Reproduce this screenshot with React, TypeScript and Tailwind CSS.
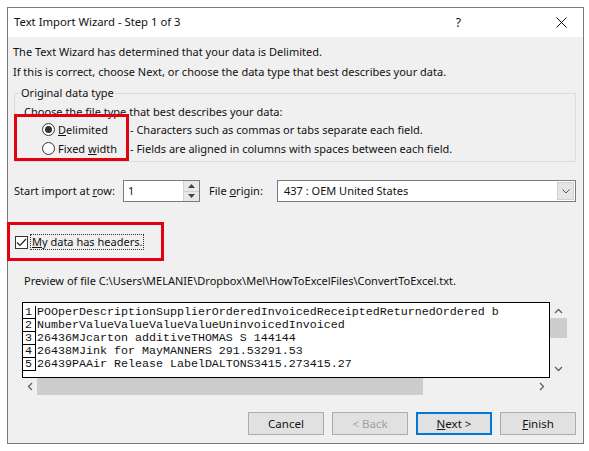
import React from "react";

const ui = { fontFamily: '"Noto Sans", "Open Sans", sans-serif' };
const mono = { fontFamily: '"Liberation Mono", "Courier New", monospace' };

const previewLines = [
  "POOperDescriptionSupplierOrderedInvoicedReceiptedReturnedOrdered b",
  "NumberValueValueValueValueUninvoicedInvoiced",
  "26436MJcarton additiveTHOMAS S 144144",
  "26438MJink for MayMANNERS 291.53291.53",
  "26439PAAir Release LabelDALTONS3415.273415.27",
  "",
];

function Radio({ checked }: { checked: boolean }) {
  return (
    <span className="flex h-[13px] w-[13px] items-center justify-center rounded-full border border-[#333] bg-white">
      {checked && <span className="h-[7px] w-[7px] rounded-full bg-[#333]" />}
    </span>
  );
}

function Button({
  children,
  primary,
  disabled,
}: {
  children: React.ReactNode;
  primary?: boolean;
  disabled?: boolean;
}) {
  return (
    <div
      className={`flex h-[23px] w-[76px] items-center justify-center bg-[#e1e1e1] text-[11.5px] ${
        primary ? "border-2 border-[#0078d7]" : "border border-[#adadad]"
      } ${disabled ? "text-[#a0a0a0]" : "text-[#111]"}`}
    >
      {children}
    </div>
  );
}

export default function App() {
  return (
    <div className="relative h-[451px] w-[589px] overflow-hidden bg-white text-[#111]" style={ui}>
      <div className="ml-[7px] mt-[7px] flex h-[437px] w-[577px] flex-col border border-[#7a7a7a]">
        {/* title bar */}
        <div className="flex h-[29px] items-center bg-white pl-[6px] text-[11.3px]">
          <span>Text Import Wizard - Step 1 of 3</span>
          <span className="ml-auto mr-[95px] text-[12px]">?</span>
          <svg width="11" height="11" viewBox="0 0 11 11" className="mr-[16px]">
            <path d="M0.5 0.5 L10.5 10.5 M10.5 0.5 L0.5 10.5" stroke="#111" strokeWidth="1" />
          </svg>
        </div>

        {/* body */}
        <div className="flex flex-1 flex-col bg-[#f0f0f0] pl-[5px] pr-[7px] pt-[5px] text-[11px] leading-[20px]">
          <div>The Text Wizard has determined that your data is Delimited.</div>
          <div>If this is correct, choose Next, or choose the data type that best describes your data.</div>

          {/* group box */}
          <div className="relative ml-[1px] mt-[11px] h-[69px] border border-[#dcdcdc] pl-[9px] pt-[10px] leading-[16px]">
            <span className="absolute -top-[9px] left-[5px] bg-[#f0f0f0] px-[1px]">Original data type</span>
            <div>Choose the file type that best describes your data:</div>
            <div className="flex h-[19px] items-center">
              <div className="ml-[18px] flex w-[88px] items-center gap-[3px]">
                <Radio checked />
                <span>
                  <u>D</u>elimited
                </span>
              </div>
              <span>- Characters such as commas or tabs separate each field.</span>
            </div>
            <div className="flex h-[19px] items-center">
              <div className="ml-[18px] flex w-[88px] items-center gap-[3px]">
                <Radio checked={false} />
                <span>
                  Fixed <u>w</u>idth
                </span>
              </div>
              <span>- Fields are aligned in columns with spaces between each field.</span>
            </div>
          </div>

          {/* start row / file origin */}
          <div className="ml-[1px] mt-[18px] flex h-[22px] items-center">
            <span className="w-[109px]">
              Start import at <u>r</u>ow:
            </span>
            <div className="flex h-[22px] w-[77px] items-center border border-[#7a7a7a] bg-white pl-[4px]">
              <span className="flex-1">1</span>
              <div className="flex h-full w-[16px] flex-col border-l border-[#d0d0d0]">
                <div className="flex flex-1 items-center justify-center border-b border-[#d0d0d0] bg-[#e8e8e8]">
                  <svg width="7" height="4" viewBox="0 0 7 4">
                    <path d="M0 4 L3.5 0 L7 4 Z" fill="#444" />
                  </svg>
                </div>
                <div className="flex flex-1 items-center justify-center bg-[#e8e8e8]">
                  <svg width="7" height="4" viewBox="0 0 7 4">
                    <path d="M0 0 L3.5 4 L7 0 Z" fill="#444" />
                  </svg>
                </div>
              </div>
            </div>
            <span className="ml-[9px] w-[68px]">
              File <u>o</u>rigin:
            </span>
            <div className="flex h-[22px] flex-1 items-center border border-[#7a7a7a] bg-white pl-[6px]">
              <span className="flex-1">437 : OEM United States</span>
              <div className="mr-[1px] flex h-[18px] w-[17px] items-center justify-center border border-[#d0d0d0] bg-[#e5e5e5]">
                <svg width="8" height="5" viewBox="0 0 8 5">
                  <path d="M0.5 0.5 L4 4 L7.5 0.5" stroke="#555" strokeWidth="1" fill="none" />
                </svg>
              </div>
            </div>
          </div>

          {/* headers checkbox */}
          <div className="ml-[2px] mt-[32px] flex h-[16px] items-center gap-[2px]">
            <span className="flex h-[13px] w-[13px] items-center justify-center border border-[#333] bg-white">
              <svg width="11" height="9" viewBox="0 0 11 9">
                <path d="M1 4.5 L4 7.5 L10 1" stroke="#222" strokeWidth="1.2" fill="none" />
              </svg>
            </span>
            <span className="border border-dotted border-[#333] px-[1px] leading-[14px]">
              <u>M</u>y data has headers.
            </span>
          </div>

          <div className="ml-[11px] mt-[23px] leading-[16px]">
            Preview of file C:\Users\MELANIE\Dropbox\Mel\HowToExcelFiles\ConvertToExcel.txt.
          </div>

          {/* preview */}
          <div className="ml-[9px] mt-[13px] flex w-[545px] flex-col">
            <div className="flex h-[76px]">
              <div className="flex-1 overflow-hidden border border-black bg-white pt-[3px]" style={mono}>
                {previewLines.map((line, i) => (
                  <div key={i} className="flex h-[13px] items-center whitespace-pre text-[11.67px] leading-[13px]">
                    <span className="w-[13px] border-b border-r border-black pl-[2px] leading-[12px]">
                      {i + 1 <= 5 ? i + 1 : ""}
                    </span>
                    <span className="pl-[1px]">{line}</span>
                  </div>
                ))}
              </div>
              <div className="flex w-[17px] flex-col items-center">
                <svg width="9" height="6" viewBox="0 0 9 6" className="mt-[6px]">
                  <path d="M1 5 L4.5 1.5 L8 5" stroke="#606060" strokeWidth="1.3" fill="none" />
                </svg>
                <div className="mt-[4px] h-[20px] w-[17px] bg-[#cdcdcd]" />
                <svg width="9" height="6" viewBox="0 0 9 6" className="mt-auto mb-[6px]">
                  <path d="M1 1 L4.5 4.5 L8 1" stroke="#606060" strokeWidth="1.3" fill="none" />
                </svg>
              </div>
            </div>
            <div className="flex h-[17px] items-center pr-[17px]">
              <svg width="6" height="9" viewBox="0 0 6 9" className="ml-[5px]">
                <path d="M5 1 L1.5 4.5 L5 8" stroke="#606060" strokeWidth="1.3" fill="none" />
              </svg>
              <div className="ml-[4px] h-[17px] w-[386px] bg-[#cdcdcd]" />
              <svg width="6" height="9" viewBox="0 0 6 9" className="ml-auto mr-[5px]">
                <path d="M1 1 L4.5 4.5 L1 8" stroke="#606060" strokeWidth="1.3" fill="none" />
              </svg>
            </div>
          </div>

          {/* buttons */}
          <div className="mt-[17px] flex justify-end gap-[8px] leading-none">
            <Button>Cancel</Button>
            <Button disabled>&lt; Back</Button>
            <Button primary>
              <u>N</u>ext &gt;
            </Button>
            <Button>
              <u>F</u>inish
            </Button>
          </div>
        </div>
      </div>

      {/* red annotation boxes */}
      <div className="absolute left-[14px] top-[114px] h-[47px] w-[115px] border-[3px] border-[#e3000f]" />
      <div className="absolute left-[7px] top-[222px] h-[39px] w-[157px] border-[3px] border-[#e3000f]" />
    </div>
  );
}
